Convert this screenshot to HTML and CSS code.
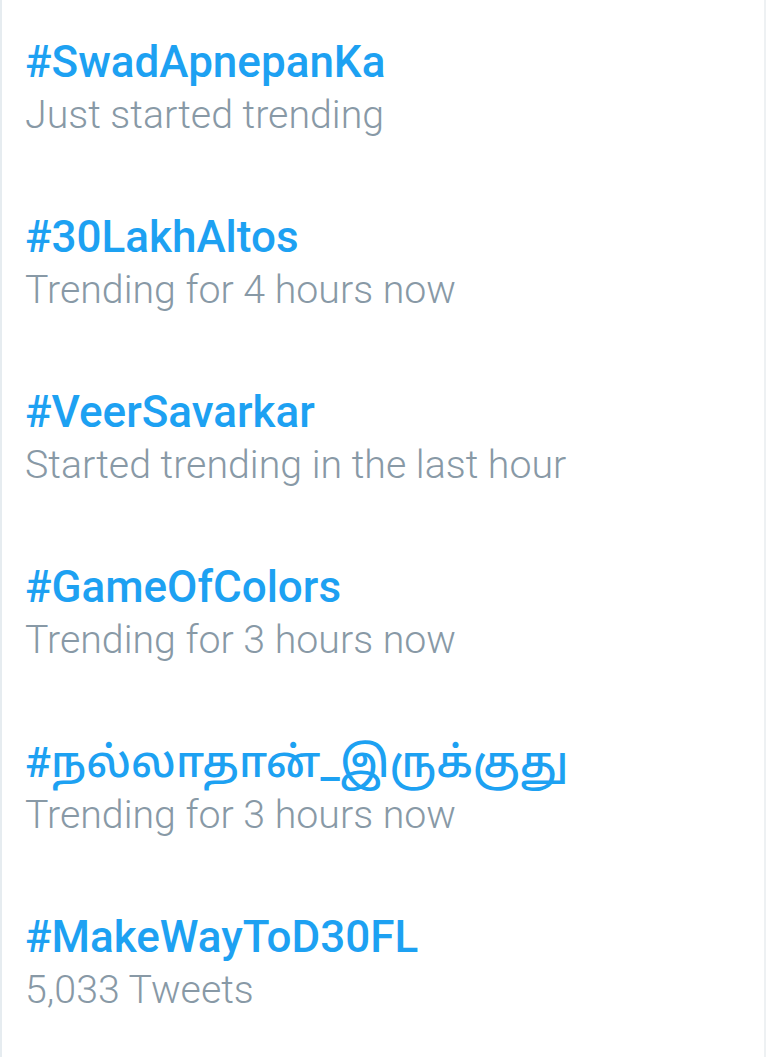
FILE: index.html
```html
<!DOCTYPE html>
<html>
<head>
<meta charset="utf-8">
<link rel="stylesheet" href="styles.css">
</head>
<body>
<div class="panel">
  <div class="trend">
    <div class="tag">#SwadApnepanKa</div>
    <div class="meta">Just started trending</div>
  </div>
  <div class="trend">
    <div class="tag">#30LakhAltos</div>
    <div class="meta">Trending for 4 hours now</div>
  </div>
  <div class="trend">
    <div class="tag">#VeerSavarkar</div>
    <div class="meta">Started trending in the last hour</div>
  </div>
  <div class="trend">
    <div class="tag">#GameOfColors</div>
    <div class="meta">Trending for 3 hours now</div>
  </div>
  <div class="trend">
    <div class="tag tamil">#நல்லாதான்_இருக்குது</div>
    <div class="meta">Trending for 3 hours now</div>
  </div>
  <div class="trend">
    <div class="tag">#MakeWayToD30FL</div>
    <div class="meta">5,033 Tweets</div>
  </div>
</div>
</body>
</html>
```
FILE: styles.css
```css
html, body {
  margin: 0;
  padding: 0;
  background: #ffffff;
}
body {
  font-family: Roboto, "Noto Sans", "Noto Sans Tamil", sans-serif;
}
.panel {
  width: 766px;
  height: 1057px;
  box-sizing: border-box;
  border-left: 2px solid #e6ecf0;
  border-right: 2px solid #eef1f3;
  padding: 37px 0 0 23px;
  display: flex;
  flex-direction: column;
  overflow: hidden;
}
.trend {
  height: 175px;
  flex-shrink: 0;
}
.tag {
  font-size: 44px;
  font-weight: 500;
  color: #1da1f2;
  line-height: 50px;
}
.tag.tamil {
  font-size: 43px;
}
.meta {
  font-size: 39.3px;
  font-weight: 300;
  color: #8899a6;
  line-height: 56px;
}
```
